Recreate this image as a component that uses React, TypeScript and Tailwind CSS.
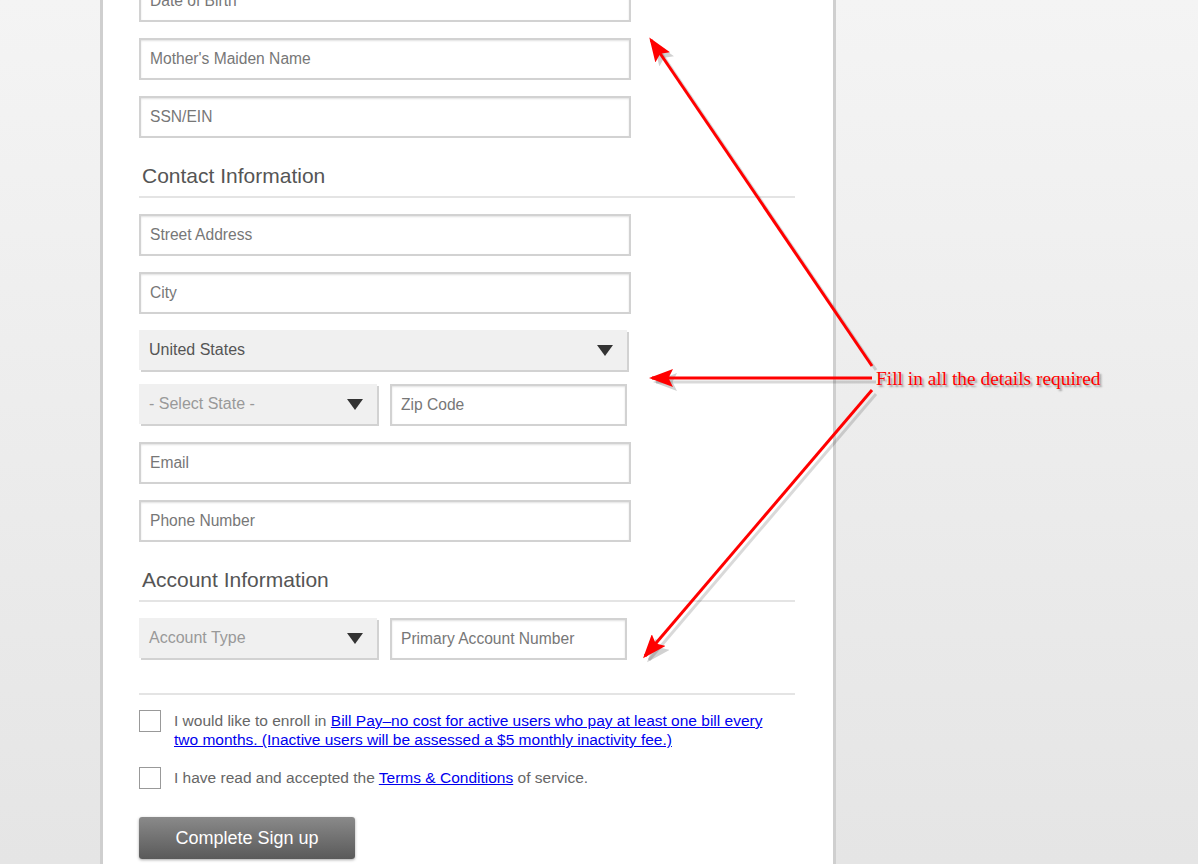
import React from "react";

const font = { fontFamily: '"Liberation Sans", Arial, sans-serif' };

function TextInput({ placeholder, className = "w-[492px]" }: { placeholder: string; className?: string }) {
  return (
    <div className={`flex h-[42px] items-center border-2 border-[#d2d2d2] bg-white pl-[9px] text-[15.6px] text-[#777] shadow-[inset_0_1px_2px_rgba(0,0,0,0.12)] ${className}`}>
      {placeholder}
    </div>
  );
}

function SelectBox({ label, muted, className }: { label: string; muted?: boolean; className: string }) {
  return (
    <div className={`flex h-[40px] items-center justify-between bg-[#f0f0f0] pl-[10px] pr-[14px] text-[16px] shadow-[2px_2px_0_#d2d2d2] ${muted ? "text-[#999]" : "text-[#555]"} ${className}`}>
      <span>{label}</span>
      <svg width="16" height="11" viewBox="0 0 16 11">
        <polygon points="0,0 16,0 8,11" fill="#333" />
      </svg>
    </div>
  );
}

function SectionHeading({ title }: { title: string }) {
  return (
    <div className="mt-[26px] border-b-2 border-[#e4e4e4] pb-[8px] pl-[3px] text-[21px] leading-[24px] text-[#555]">
      {title}
    </div>
  );
}

function Checkbox() {
  return <div className="mt-px h-[22px] w-[22px] shrink-0 border border-[#999] bg-white" />;
}

function Annotation() {
  const arrows = [
    { x1: 872, y1: 366, x2: 651, y2: 40 },
    { x1: 872, y1: 378, x2: 652, y2: 378 },
    { x1: 872, y1: 390, x2: 645, y2: 656 },
  ];
  return (
    <svg className="pointer-events-none absolute left-0 top-0" width="1198" height="864">
      <defs>
        <marker id="head" markerWidth="8" markerHeight="6" refX="7" refY="3" orient="auto" markerUnits="strokeWidth">
          <polygon points="0,0 8,3 0,6 1.5,3" fill="red" />
        </marker>
        <marker id="headShadow" markerWidth="8" markerHeight="6" refX="7" refY="3" orient="auto" markerUnits="strokeWidth">
          <polygon points="0,0 8,3 0,6 1.5,3" fill="rgba(0,0,0,0.18)" />
        </marker>
      </defs>
      {arrows.map((a, i) => (
        <g key={i}>
          <line x1={a.x1 + 4} y1={a.y1 + 4} x2={a.x2 + 4} y2={a.y2 + 4} stroke="rgba(0,0,0,0.15)" strokeWidth="3" markerEnd="url(#headShadow)" />
          <line x1={a.x1} y1={a.y1} x2={a.x2} y2={a.y2} stroke="#ff0000" strokeWidth="3" markerEnd="url(#head)" />
        </g>
      ))}
    </svg>
  );
}

export default function App() {
  return (
    <div className="relative h-[864px] overflow-hidden bg-gradient-to-b from-[#f4f4f4] to-[#e5e5e5]" style={font}>
      <div className="ml-[100px] h-full w-[736px] overflow-hidden border-x-[3px] border-[#cfcfcf] bg-white pl-[36px] pr-[38px]">
        <div className="-mt-[20px] flex flex-col">
          <TextInput placeholder="Date of Birth" />
          <div className="mt-[16px]"><TextInput placeholder="Mother's Maiden Name" /></div>
          <div className="mt-[16px]"><TextInput placeholder="SSN/EIN" /></div>

          <SectionHeading title="Contact Information" />
          <div className="mt-[16px]"><TextInput placeholder="Street Address" /></div>
          <div className="mt-[16px]"><TextInput placeholder="City" /></div>
          <div className="mt-[16px]"><SelectBox label="United States" className="w-[488px]" /></div>
          <div className="mt-[14px] flex items-start gap-[13px]">
            <SelectBox label="- Select State -" muted className="w-[238px]" />
            <TextInput placeholder="Zip Code" className="w-[237px]" />
          </div>
          <div className="mt-[16px]"><TextInput placeholder="Email" /></div>
          <div className="mt-[16px]"><TextInput placeholder="Phone Number" /></div>

          <SectionHeading title="Account Information" />
          <div className="mt-[16px] flex items-start gap-[13px]">
            <SelectBox label="Account Type" muted className="w-[238px]" />
            <TextInput placeholder="Primary Account Number" className="w-[237px]" />
          </div>

          <div className="mt-[33px] border-t-2 border-[#e4e4e4]" />
          <div className="mt-[14px] flex gap-[13px] text-[15.5px] leading-[19px] text-[#666]">
            <Checkbox />
            <p className="w-[595px] pt-[2px]">
              I would like to enroll in{" "}
              <a className="text-[#0000ee] underline">
                Bill Pay–no cost for active users who pay at least one bill every two months. (Inactive users will be assessed a $5 monthly inactivity fee.)
              </a>
            </p>
          </div>
          <div className="mt-[17px] flex gap-[13px] text-[15.5px] leading-[19px] text-[#666]">
            <Checkbox />
            <p className="pt-[2px]">
              I have read and accepted the <a className="text-[#0000ee] underline">Terms &amp; Conditions</a> of service.
            </p>
          </div>
          <button
            type="button"
            className="mt-[28px] h-[42px] w-[216px] rounded-[3px] bg-gradient-to-b from-[#8a8a8a] to-[#5a5a5a] text-[18px] text-white shadow-[0_1px_3px_rgba(0,0,0,0.35)]"
          >
            Complete Sign up
          </button>
        </div>
      </div>

      <Annotation />
      <div
        className="absolute left-[876px] top-[368px] text-[19.4px] leading-[22px] text-[#ff0000] [text-shadow:2px_2px_2px_rgba(0,0,0,0.35)]"
        style={{ fontFamily: '"Liberation Serif", "Times New Roman", serif' }}
      >
        Fill in all the details required
      </div>
    </div>
  );
}
